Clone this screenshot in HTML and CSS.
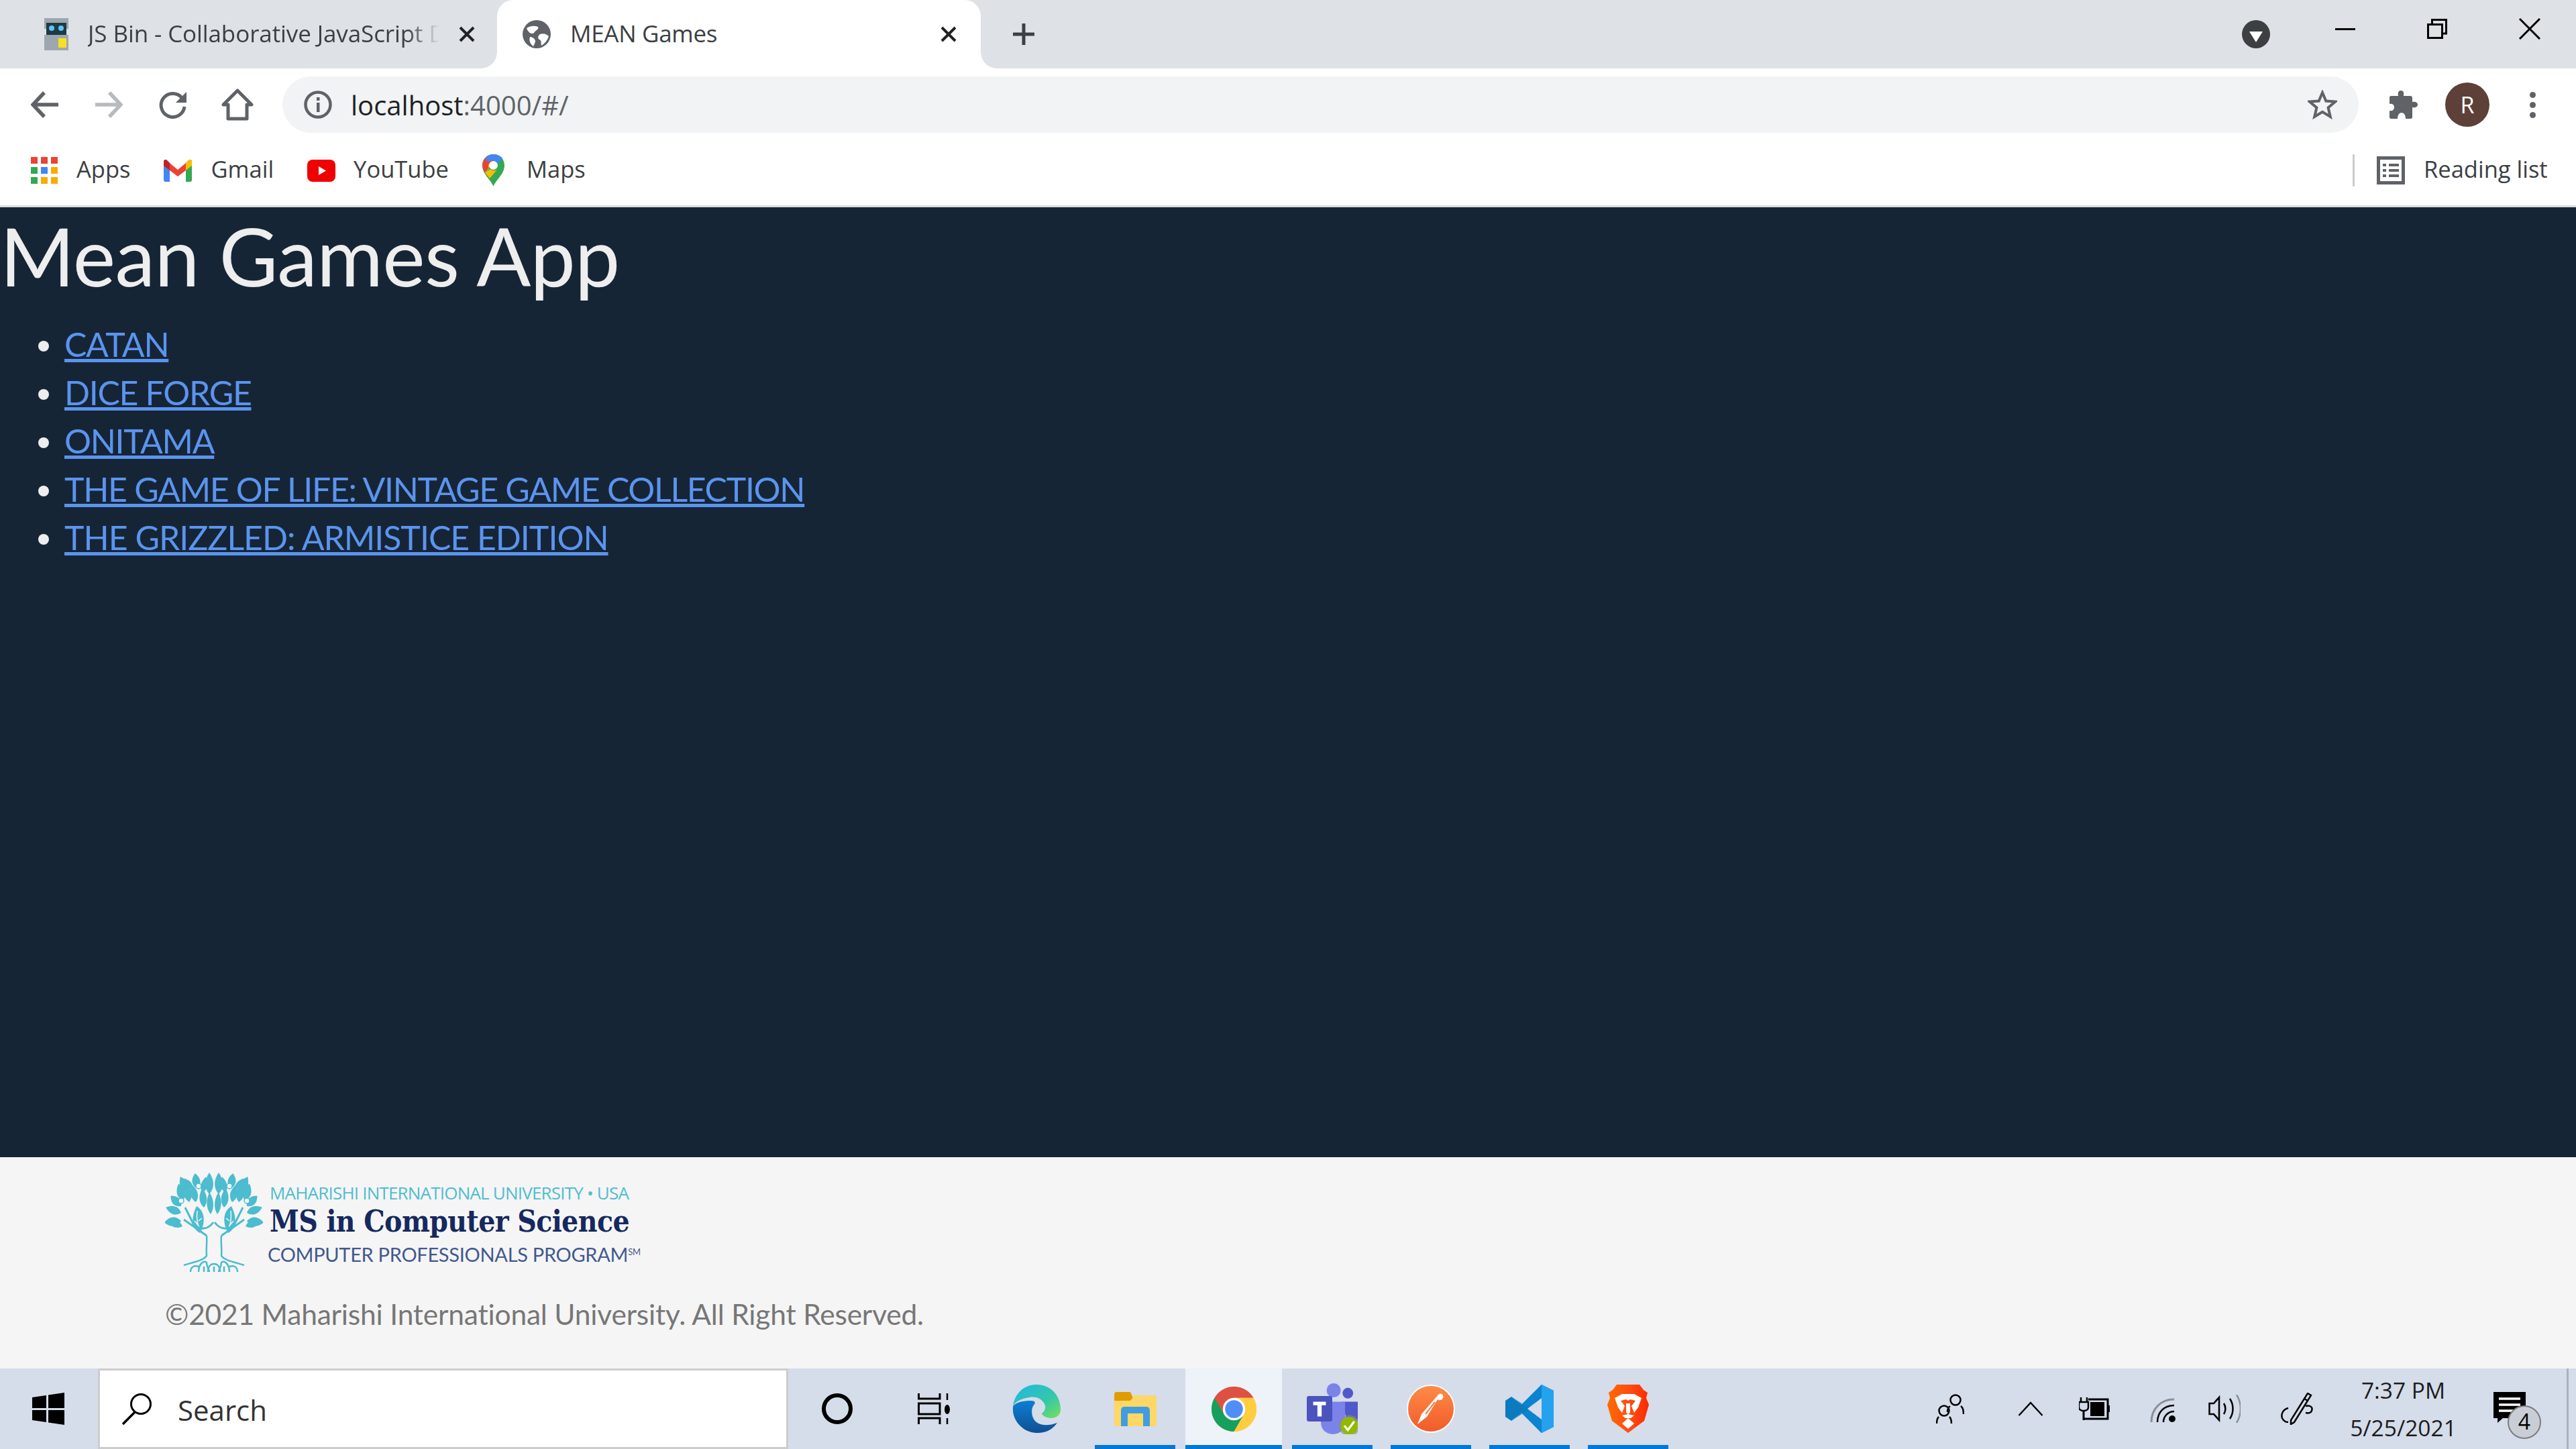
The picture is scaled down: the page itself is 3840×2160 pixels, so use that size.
FILE: index.html
```html
<!DOCTYPE html>
<html lang="en">
<head>
<meta charset="utf-8">
<title>MEAN Games</title>
<link rel="stylesheet" href="styles.css">
</head>
<body>
<header class="chrome">
  <div class="tabstrip">
    <div class="tab tab-inactive">
      <svg class="fav-jsbin" viewBox="0 0 36 48"><rect y="0" width="36" height="16" fill="#9ea7af"/><rect x="3" y="7" width="30" height="18" fill="#1e3a46"/><circle cx="11" cy="15" r="4" fill="#5ec4f0"/><circle cx="25" cy="15" r="4" fill="#5ec4f0"/><rect y="25" width="36" height="23" fill="#9ea7af"/><rect x="21" y="30" width="12" height="14" fill="#f5e021"/></svg>
      <span class="tab-title tab-title-fade">JS Bin - Collaborative JavaScript D</span>
      <svg class="tab-close" viewBox="0 0 24 24"><path d="M2 2L22 22M22 2L2 22" stroke="#1f2124" stroke-width="4" fill="none"/></svg>
    </div>
    <div class="tab tab-active">
      <svg class="fav-globe" viewBox="0 0 42 42"><circle cx="21" cy="21" r="21" fill="#5f6368"/><path d="M6 12C12 8 18 8 23 10C25 14 19 15 17 19C14 21 9 20 6 12ZM26 21C31 19 36 21 39 24C37 30 33 35 28 38C27 33 29 31 25 29C22 27 23 23 26 21ZM11 25C15 25 19 28 19 32C18 35 17 37 16 39C12 36 9 31 11 25Z" fill="#fff"/></svg>
      <span class="tab-title">MEAN Games</span>
      <svg class="tab-close" viewBox="0 0 24 24"><path d="M2 2L22 22M22 2L2 22" stroke="#1f2124" stroke-width="4" fill="none"/></svg>
    </div>
    <svg class="new-tab" viewBox="0 0 36 36"><path d="M18 2V34M2 18H34" stroke="#3c4043" stroke-width="5" fill="none"/></svg>
    <div class="strip-right">
      <svg class="tab-search" viewBox="0 0 42 42"><circle cx="21" cy="21" r="21" fill="#3c4043"/><path d="M11 17H31L21 33Z" fill="#fff"/></svg>
      <svg class="win-min" viewBox="0 0 30 3"><rect width="30" height="3" fill="#000"/></svg>
      <svg class="win-restore" viewBox="0 0 30 30"><path d="M1.5 8.5H22.5V28.500H1.500ZM7.500 8V1.500H28.500V22H23" fill="none" stroke="#000" stroke-width="3"/></svg>
      <svg class="win-close" viewBox="0 0 32 32"><path d="M1 1L31 31M31 1L1 31" stroke="#000" stroke-width="3" fill="none"/></svg>
    </div>
  </div>
  <div class="toolbar">
    <svg class="tb-icon tb-back" viewBox="0 0 42 42"><path d="M20 3L3 21L20 39M3 21H41" fill="none" stroke="#5f6368" stroke-width="5.500"/></svg>
    <svg class="tb-icon tb-forward" viewBox="0 0 42 42"><path d="M22 3L39 21L22 39M39 21H1" fill="none" stroke="#b8babd" stroke-width="5.500"/></svg>
    <svg class="tb-icon tb-reload" viewBox="0 0 42 42"><path d="M35 12A17.500 17.500 0 1 0 38 24" fill="none" stroke="#5f6368" stroke-width="5"/><path d="M41 2V18H25Z" fill="#5f6368"/></svg>
    <svg class="tb-icon tb-home" viewBox="0 0 48 48"><path d="M24 3L45 24H38V45H10V24H3Z" fill="none" stroke="#5f6368" stroke-width="5" stroke-linejoin="round"/></svg>
    <div class="omnibox">
      <svg class="info" viewBox="0 0 42 42"><circle cx="21" cy="21" r="18.500" fill="none" stroke="#5f6368" stroke-width="4.500"/><rect x="19" y="18" width="4.500" height="14" fill="#5f6368"/><rect x="19" y="10" width="4.500" height="5" fill="#5f6368"/></svg>
      <span class="url"><span class="url-host">localhost</span>:4000/#/</span>
      <svg class="star" viewBox="0 0 44 44"><path d="M22 4L27.300 16.500L41 17.600L30.600 26.500L33.800 40L22 32.900L10.200 40L13.400 26.500L3 17.600L16.700 16.500Z" fill="none" stroke="#5f6368" stroke-width="4"/></svg>
    </div>
    <svg class="tb-icon puzzle" viewBox="0 0 42 42"><path d="M2 8H13C12 2 14 0 17 0C20 0 22 2 21 8H31C33 8 34 9 34 11V17C39 16 42 18 42 21C42 24 39 26 34 25V40C34 41 33 42 31 42H24C24 36 21 33 18 33C15 33 12 36 12 42H3C1 42 0 41 0 40V30C5 31 7 28 7 25C7 22 5 19 0 20V10C0 9 1 8 2 8Z" fill="#5f6368"/></svg>
    <span class="avatar">R</span>
    <div class="kebab"><i></i><i></i><i></i></div>
  </div>
  <div class="bookmarks">
    <div class="bm bm-apps">
      <svg class="bm-i-apps" viewBox="0 0 40 40"><g fill="#ea4335"><rect x="0" y="0" width="10" height="10"/><rect x="15" y="0" width="10" height="10"/><rect x="30" y="0" width="10" height="10"/></g><rect x="0" y="15" width="10" height="10" fill="#34a853"/><rect x="15" y="15" width="10" height="10" fill="#4285f4"/><rect x="30" y="15" width="10" height="10" fill="#f9ab00"/><rect x="0" y="30" width="10" height="10" fill="#34a853"/><rect x="15" y="30" width="10" height="10" fill="#f9ab00"/><rect x="30" y="30" width="10" height="10" fill="#f9ab00"/></svg>
      <span>Apps</span>
    </div>
    <div class="bm bm-gmail">
      <svg class="bm-i-gmail" viewBox="0 0 42 33"><path d="M0 3C0 0 3-1 5 1L9 5V33H3C1 33 0 32 0 30Z" fill="#4285f4"/><path d="M33 5L37 1C39-1 42 0 42 3V30C42 32 41 33 39 33H33Z" fill="#34a853"/><path d="M9 5L21 15L33 5V16L21 25L9 16Z" fill="#ea4335"/><path d="M0 3C0 0 3-1 5 1L9 5V16L0 9Z" fill="#c5221f"/><path d="M33 5L37 1C39-1 42 0 42 3V9L33 16Z" fill="#fbbc04"/></svg>
      <span>Gmail</span>
    </div>
    <div class="bm bm-yt">
      <svg class="bm-i-yt" viewBox="0 0 42 33"><rect width="42" height="33" rx="8" fill="#f00000"/><path d="M17 10L28 16.500L17 23Z" fill="#fff"/></svg>
      <span>YouTube</span>
    </div>
    <div class="bm bm-maps">
      <svg class="bm-i-maps" viewBox="0 0 33 48"><path d="M16.500 48C13 38 0 30 0 16.500C0 7 7 0 16.500 0C26 0 33 7 33 16.500C33 30 20 38 16.500 48Z" fill="#34a853"/><path d="M4 6C7 2 11 0 16.500 0C19 0 21 .5 23 1.500L4 27C1.500 23 0 20 0 16.500C0 12 1.500 9 4 6Z" fill="#ea4335"/><path d="M9 12L4 6C7 2 11 0 16.500 0C22 0 27 2 30 6L23 14C20 8 13 8 9 12Z" fill="#4285f4"/><path d="M4 27L16 12C10 13 7 17 10 21L4 27C6 30 9 33 11 36L22 23C19 25 15 25 12 22Z" fill="#fbbc04"/><circle cx="16.500" cy="16.500" r="6.500" fill="#fff"/></svg>
      <span>Maps</span>
    </div>
    <div class="reading">
      <svg class="bm-i-read" viewBox="0 0 42 42"><path d="M2.500 2.500H39.500V39.500H2.500Z" fill="none" stroke="#5f6368" stroke-width="5"/><path d="M9 11H14V15H9ZM18 11H33V15H18ZM9 19H14V23H9ZM18 19H33V23H18ZM9 27H14V31H9ZM18 27H33V31H18Z" fill="#5f6368"/></svg>
      <span>Reading list</span>
    </div>
  </div>
</header>

<main class="app">
  <h1 class="app-title">Mean Games App</h1>
  <ul class="games">
    <li><a href="#">CATAN</a></li>
    <li><a href="#">DICE FORGE</a></li>
    <li><a href="#">ONITAMA</a></li>
    <li><a href="#">THE GAME OF LIFE: VINTAGE GAME COLLECTION</a></li>
    <li class="game-wide"><a href="#">THE GRIZZLED: ARMISTICE EDITION</a></li>
  </ul>
</main>

<footer class="site-footer">
  <div class="logo">
    <svg class="tree" viewBox="0 0 146 150">
      <defs>
        <path id="lf" d="M0 0C-8-6-8-14 0-22C8-14 8-6 0 0Z" fill="#4cbccf"/>
        <g id="half">
          <use href="#lf" transform="translate(66,32) scale(1,1.450)"/>
          <use href="#lf" transform="translate(48,24) rotate(-8) scale(1,1.050)"/>
          <use href="#lf" transform="translate(42,24) rotate(-50) scale(.9,1.100)"/>
          <use href="#lf" transform="translate(56,30) rotate(12) scale(.8,1.100)"/>
          <use href="#lf" transform="translate(34,30) rotate(-25) scale(1,1.200)"/>
          <use href="#lf" transform="translate(27,42) rotate(-15) scale(1,1.200)"/>
          <use href="#lf" transform="translate(24,50) rotate(-45) scale(1,1)"/>
          <use href="#lf" transform="translate(24,60) rotate(-70) scale(1,1.100)"/>
          <use href="#lf" transform="translate(24,72) rotate(-95) scale(1.100,1.150)"/>
          <use href="#lf" transform="translate(26,80) rotate(-70) scale(.9,1.100)"/>
          <use href="#lf" transform="translate(36,44) rotate(-10) scale(1,1.300)"/>
          <use href="#lf" transform="translate(46,44) rotate(-12) scale(.9,1.200)"/>
          <use href="#lf" transform="translate(58,52) rotate(-5) scale(.9,1.300)"/>
          <use href="#lf" transform="translate(68,62) rotate(-3) scale(.8,1.500)"/>
          <path d="M52 90C40 84 38 68 47 50C58 56 62 72 52 90Z" fill="#4cbccf"/>
          <path d="M52 84C47 76 47 66 48 57M50 72L55 68M49 78L44 72" stroke="#f5f5f5" stroke-width="1.500" fill="none"/>
          <circle cx="50" cy="20" r="4" fill="#f5f5f5" stroke="#4cbccf" stroke-width="1.500"/>
          <circle cx="24" cy="42" r="4" fill="#f5f5f5" stroke="#4cbccf" stroke-width="1.500"/>
          <path d="M62 94C63 104 61 112 62 124C58 130 48 132 28 138" fill="none" stroke="#4cbccf" stroke-width="2.500"/>
          <path d="M62 94L28 70M30 52L42 76C48 84 62 88 72 74" fill="none" stroke="#4cbccf" stroke-width="3"/>
          <path d="M38 148C38 140 44 138 50 140M50 148C50 136 58 130 62 134C62 142 66 144 66 148M58 148V140" fill="none" stroke="#4cbccf" stroke-width="2.500"/>
        </g>
      </defs>
      <use href="#half"/>
      <use href="#half" transform="matrix(-1 0 0 1 146 0)"/>
      <path d="M64 148C64 140 68 136 73 136C78 136 82 140 82 148M73 140V148" fill="none" stroke="#4cbccf" stroke-width="2.500"/>
    </svg>
    <div class="logo-text">
      <div class="logo-line1">MAHARISHI INTERNATIONAL UNIVERSITY • USA</div>
      <div class="logo-line2">MS in Computer Science</div>
      <div class="logo-line3">COMPUTER PROFESSIONALS PROGRAM<sup>SM</sup></div>
    </div>
  </div>
  <p class="copyright">©2021 Maharishi International University. All Right Reserved.</p>
</footer>

<nav class="taskbar">
  <div class="start">
    <svg class="win-logo" viewBox="0 0 48 48"><path d="M0 7L21 4V23H0ZM24 3.500L48 0V23H24ZM0 26H21V44L0 41ZM24 26H48V48L24 44.500Z" fill="#000"/></svg>
  </div>
  <div class="search">
    <svg class="search-icon" viewBox="0 0 48 48"><circle cx="30" cy="17" r="14.500" fill="none" stroke="#000" stroke-width="3"/><path d="M21 29L3 47" stroke="#000" stroke-width="3.500"/></svg>
    <span>Search</span>
  </div>
  <svg class="cortana" viewBox="0 0 48 48"><circle cx="24" cy="24" r="20" fill="none" stroke="#000" stroke-width="6"/></svg>
  <svg class="taskview" viewBox="0 0 48 46"><path d="M1.500 0V8H33V0M1.500 46V37H33V46M1.500 15H33V31H1.500Z" fill="none" stroke="#000" stroke-width="3"/><path d="M44 0V10M44 37V46" stroke="#000" stroke-width="2.500"/><ellipse cx="44" cy="24" rx="4" ry="7" fill="#000"/></svg>
  <svg class="app-edge" viewBox="0 0 72 72">
    <defs>
      <linearGradient id="eg" x1="0" y1="0" x2="1" y2="1"><stop offset="0" stop-color="#1fb6e4"/><stop offset=".6" stop-color="#35c8a8"/><stop offset="1" stop-color="#79e05c"/></linearGradient>
      <linearGradient id="eb" x1="0" y1="0" x2="0" y2="1"><stop offset="0" stop-color="#0d7fd4"/><stop offset="1" stop-color="#0f4f94"/></linearGradient>
    </defs>
    <path d="M1 33C3 13 18 0 36 0C58 0 72 17 72 37C72 46 65 50 58 50C51 50 44 46 44 43C48 40 50 36 49 31C46 22 36 17 26 19C12 21 3 26 1 33Z" fill="url(#eg)"/>
    <path d="M1 33C-1 54 16 72 38 72C50 72 60 67 67 57C56 61 44 62 36 56C28 50 28 37 31 32C36 26 34 24 27 24C13 24 3 28 1 33Z" fill="url(#eb)"/>
  </svg>
  <div class="slot slot-on">
    <svg class="app-files" viewBox="0 0 63 51"><path d="M0 4C0 2 1 0 3 0H24L30 13H0Z" fill="#e19c00"/><path d="M0 13H24L30 5H60C62 5 63 6 63 8V48C63 50 62 51 60 51H3C1 51 0 50 0 48Z" fill="#ffd766"/><path d="M10 51V28C10 24 12 22 15 22H48C51 22 53 24 53 28V51H43V32H20V51Z" fill="#409ee0"/></svg>
  </div>
  <div class="slot slot-on slot-active">
    <svg class="app-chrome" viewBox="0 0 48 48">
      <circle cx="24" cy="24" r="24" fill="#fbc02d"/>
      <path d="M3.200 12A24 24 0 0 0 24 48L34.400 30L13.600 18Z" fill="#16a05d"/>
      <path d="M3.200 12A24 24 0 0 1 44.800 12H24L13.600 30Z" fill="#dd5144"/>
      <path d="M44.800 12H24L34.400 30L24 48A24 24 0 0 0 44.800 12Z" fill="#ffcd40"/>
      <circle cx="24" cy="24" r="12" fill="#fff"/><circle cx="24" cy="24" r="9.500" fill="#4f8ef5"/>
    </svg>
  </div>
  <div class="slot slot-on">
    <svg class="app-teams" viewBox="0 0 72 72">
      <circle cx="38" cy="10" r="10" fill="#7b83eb"/><circle cx="58" cy="14" r="7.500" fill="#5059c9"/>
      <path d="M50 26H72V50C72 58 64 62 58 60Z" fill="#5059c9"/>
      <path d="M20 26H54V56C54 66 46 72 37 72C28 72 20 66 20 56Z" fill="#7b83eb"/>
      <rect x="0" y="18" width="36" height="36" rx="3" fill="#4b53bc"/>
      <path d="M9 26H27V31H21V47H15V31H9Z" fill="#fff"/>
      <circle cx="60" cy="60" r="15" fill="#8a8a8a" opacity=".6"/>
      <circle cx="60" cy="60" r="12.500" fill="#92b900"/>
      <path d="M53 60L58 66L67 54" fill="none" stroke="#fff" stroke-width="3"/>
    </svg>
  </div>
  <div class="slot slot-on">
    <svg class="app-postman" viewBox="0 0 72 72">
      <defs><linearGradient id="pg" x1="0" y1="0" x2="0" y2="1"><stop offset="0" stop-color="#ff8c46"/><stop offset="1" stop-color="#f15a2b"/></linearGradient></defs>
      <circle cx="36" cy="36" r="35" fill="url(#pg)" stroke="#fff" stroke-width="2"/>
      <path d="M48 14C52 12 56 16 54 20C52 24 48 24 46 22L30 48L16 59L22 44Z" fill="#fff"/>
      <path d="M28 44L42 26" stroke="#f47036" stroke-width="2"/>
    </svg>
  </div>
  <div class="slot slot-on">
    <svg class="app-vscode" viewBox="0 0 72 72">
      <path d="M54 0L72 9V63L54 72L24 42L9 54L0 48V24L9 18L24 30Z" fill="#0b7bc0"/>
      <path d="M54 0L72 9V63L54 72Z" fill="#24a2ee"/>
      <path d="M54 0L54 21L38 36L54 51V72L24 42L9 54L36 36L9 18L24 30Z" fill="#0a84cf"/>
      <path d="M54 20V52L33 36Z" fill="#d5dcea"/>
    </svg>
  </div>
  <div class="slot slot-on">
    <svg class="app-brave" viewBox="0 0 62 72">
      <defs><linearGradient id="bg" x1="0" y1="0" x2="1" y2="0"><stop offset="0" stop-color="#ff6a00"/><stop offset=".55" stop-color="#ff4c12"/><stop offset="1" stop-color="#fb2a00"/></linearGradient></defs>
      <path d="M14 0H48L54 8L60 12L58 20L62 30L55 54L31 72L7 54L0 30L4 20L2 12L8 8Z" fill="url(#bg)"/>
      <path d="M11 20L22 14H40L51 20L46 34L40 42L36 32L42 24L34 22L31 24L28 22L20 24L26 32L22 42L16 34Z" fill="#fff"/>
      <path d="M28 28H34V42L31 44L28 42Z" fill="#fff"/>
      <path d="M31 50L40 58L31 66L22 58Z" fill="#fff"/>
      <path d="M22 46L31 44L40 46L35 50H27Z" fill="#fff"/>
    </svg>
  </div>
  <div class="tray">
    <svg class="t-people" viewBox="0 0 42 44"><circle cx="29" cy="9" r="7.500" fill="none" stroke="#000" stroke-width="2.500"/><path d="M21 18C18 20 17 24 17 27M37 18C40 20 41 24 41 30" fill="none" stroke="#000" stroke-width="2.500"/><circle cx="12" cy="25" r="7.500" fill="none" stroke="#000" stroke-width="2.500"/><path d="M4 34C2 36 1 40 1 44M20 34C22 36 23 40 23 44" fill="none" stroke="#000" stroke-width="2.500"/></svg>
    <svg class="t-caret" viewBox="0 0 38 22"><path d="M1.500 21L19 2L36.500 21" fill="none" stroke="#000" stroke-width="2.500"/></svg>
    <svg class="t-battery" viewBox="0 0 46 34"><path d="M3 0V7M12 0V7" stroke="#000" stroke-width="2.500"/><path d="M0 7H14V15C14 18 11 20 8 20H6C3 20 0 18 0 15Z" fill="none" stroke="#000" stroke-width="2.500"/><path d="M7 20V34" stroke="#000" stroke-width="3"/><path d="M14 3H43V32H7" fill="none" stroke="#000" stroke-width="3"/><rect x="17" y="7" width="21" height="21" fill="#000"/><rect x="43" y="12" width="3" height="10" fill="#000"/></svg>
    <svg class="t-wifi" viewBox="0 0 38 36"><path d="M2 36C2 16 16 2 36 2" fill="none" stroke="#8a8f98" stroke-width="3"/><path d="M11 36C11 21 21 11 36 11" fill="none" stroke="#000" stroke-width="2.500"/><path d="M20 36C20 27 27 20 36 20" fill="none" stroke="#000" stroke-width="2.500"/><circle cx="33" cy="31" r="5" fill="#000"/></svg>
    <svg class="t-volume" viewBox="0 0 48 42"><path d="M1.500 13H8L16 4V38L8 29H1.500Z" fill="none" stroke="#000" stroke-width="2.500"/><path d="M23 13C26 18 26 24 23 29" fill="none" stroke="#000" stroke-width="2.500"/><path d="M32 6C38 15 38 27 32 36" fill="none" stroke="#000" stroke-width="2.500"/><path d="M42 0C50 13 50 29 42 42" fill="none" stroke="#8a8f98" stroke-width="2.500"/></svg>
    <svg class="t-pen" viewBox="0 0 50 48"><path d="M40 1L45 4L20 44L15 47L15 41Z" fill="none" stroke="#000" stroke-width="2.500"/><path d="M35 9L40 12" stroke="#000" stroke-width="2.500"/><path d="M37 20C44 18 48 22 46 27C45 30 41 31 37 30" fill="none" stroke="#000" stroke-width="2.500"/><path d="M11 23C3 25 0 32 2 38C4 42 8 44 11 44" fill="none" stroke="#000" stroke-width="2.500"/></svg>
    <div class="clock"><span>7:37 PM</span><span>5/25/2021</span></div>
    <div class="notif">
      <svg class="t-notif" viewBox="0 0 48 46"><path d="M0 0H48V39H14L6 46V39H0Z" fill="#000"/><path d="M8 10H40M8 19H40M8 28H30" stroke="#fff" stroke-width="3.500"/></svg>
      <span class="notif-badge">4</span>
    </div>
    <i class="show-desktop"></i>
  </div>
</nav>
</body>
</html>
```

FILE: styles.css
```css
* { box-sizing: border-box; }
html, body { margin: 0; padding: 0; }
body {
  width: 3840px;
  height: 2160px;
  display: flex;
  flex-direction: column;
  overflow: hidden;
  font-family: "Open Sans", "Liberation Sans", sans-serif;
  background: #162536;
}
svg { display: block; flex: none; }

/* Browser chrome */
.chrome { flex: none; background: #fff; border-bottom: 3px solid #dcdee1; }
.tabstrip { height: 102px; background: #dee1e6; display: flex; align-items: stretch; }
.tab { display: flex; align-items: center; position: relative; font-size: 35px; letter-spacing: -0.3px; color: #3c4043; }
.tab-inactive { width: 741px; padding-left: 66px; }
.tab-active { width: 721px; background: #fff; border-radius: 24px 24px 0 0; padding-left: 38px; color: #3c4043; }
.tab-active::before, .tab-active::after {
  content: ""; position: absolute; bottom: 0; width: 24px; height: 24px;
  background: radial-gradient(circle at 0 0, #dee1e6 23.500px, #fff 24px);
}
.tab-active::before { left: -24px; }
.tab-active::after { right: -24px; background: radial-gradient(circle at 100% 0, #dee1e6 23.500px, #fff 24px); }
.tab-title { white-space: nowrap; margin-top: -3px; }
.tab-title-fade {
  width: 529px; overflow: hidden; margin-left: 29px; line-height: 50px; letter-spacing: -0.1px;
  -webkit-mask-image: linear-gradient(90deg, #000 90%, transparent 99%);
  mask-image: linear-gradient(90deg, #000 90%, transparent 99%);
}
.tab-active .tab-title { margin-left: 29px; width: 540px; }
.fav-jsbin { width: 36px; height: 48px; }
.fav-globe { width: 42px; height: 42px; }
.tab-close { width: 24px; height: 24px; margin-left: 24px; }
.tab-active .tab-close { margin-left: 12px; }
.new-tab { width: 36px; height: 36px; align-self: center; margin-left: 46px; }
.strip-right { margin-left: auto; display: flex; align-items: center; padding-right: 53px; }
.tab-search { width: 42px; height: 42px; }
.win-min { width: 30px; height: 3px; margin-left: 97px; margin-top: -16px; }
.win-restore { width: 30px; height: 30px; margin-left: 107px; margin-top: -16px; }
.win-close { width: 32px; height: 32px; margin-left: 107px; margin-top: -16px; }

.toolbar { height: 102px; display: flex; align-items: center; padding: 0 0 0 46px; background: #fff; }
.tb-icon { width: 42px; height: 42px; }
.tb-back { margin-top: 6px; }
.tb-forward { margin-left: 53px; margin-top: 6px; }
.tb-reload { margin-left: 54px; margin-top: 6px; }
.tb-home { width: 48px; height: 48px; margin-left: 51px; margin-top: 6px; }
.omnibox {
  margin-left: 43px; width: 3095px; height: 84px; margin-top: 12px; margin-bottom: 6px;
  background: #f1f3f4; border-radius: 42px;
  display: flex; align-items: center; padding-left: 32px; padding-right: 32px;
}
.omnibox .info { width: 42px; height: 42px; }
.url { margin-left: 28px; font-size: 40px; color: #5f6368; }
.url-host { color: #202124; }
.star { width: 44px; height: 44px; margin-left: auto; }
.puzzle { margin-left: 46px; margin-top: 6px; }
.avatar {
  width: 66px; height: 66px; border-radius: 50%; background: #5d4037; color: #fff;
  margin-left: 41px; margin-top: 6px;
  display: flex; align-items: center; justify-content: center; font-size: 34px;
}
.kebab { display: flex; flex-direction: column; gap: 6px; margin-left: 60px; margin-top: 6px; }
.kebab i { display: block; width: 9px; height: 9px; border-radius: 50%; background: #5f6368; }

.bookmarks { height: 102px; display: flex; align-items: center; font-size: 34.500px; color: #3c4043; padding-left: 46px; padding-bottom: 2px; }
.bm { display: flex; align-items: center; }
.bm span, .reading span { margin-top: -6px; }
.bm-i-apps { width: 40px; height: 40px; margin-right: 28px; }
.bm-i-gmail { width: 42px; height: 33px; margin-right: 28px; }
.bm-i-yt { width: 42px; height: 33px; margin-right: 27px; }
.bm-i-maps { width: 33px; height: 48px; margin-right: 33px; }
.bm-gmail { margin-left: 50px; }
.bm-yt { margin-left: 50px; }
.bm-maps { margin-left: 50px; }
.reading { margin-left: auto; display: flex; align-items: center; width: 333px; border-left: 3px solid #ccc; height: 48px; padding-left: 33px; white-space: nowrap; }
.bm-i-read { width: 42px; height: 42px; margin-right: 28px; }

/* App */
.app { flex: 1; background: #162536; color: #eee; font-family: Lato, "Liberation Sans", sans-serif; }
.app-title { margin: 0 0 24px; font-size: 120px; font-weight: 400; line-height: 1.2; letter-spacing: -0.7px; }
.games { margin: 0; padding: 0 0 0 96px; font-size: 50px; line-height: 72px; letter-spacing: -1.3px; }
.games a { color: #5b94ef; }
.game-wide { letter-spacing: -1px; }

/* Footer */
.site-footer { flex: none; height: 315px; background: #f5f5f5; padding: 23px 0 0 246px; font-family: Lato, "Liberation Sans", sans-serif; }
.logo { display: flex; align-items: flex-start; height: 150px; }
.tree { width: 146px; height: 150px; }
.logo-text { margin-left: 10px; padding-top: 17px; }
.logo-line1 { font-family: "Open Sans", sans-serif; font-weight: 500; font-size: 26px; line-height: 26px; letter-spacing: -0.8px; color: #4fbdd0; white-space: nowrap; }
.logo-line2 { font-family: "DejaVu Serif", serif; font-stretch: condensed; font-weight: 700; font-size: 44px; line-height: 60px; letter-spacing: -0.6px; color: #16295f; white-space: nowrap; }
.logo-line3 { font-size: 29px; line-height: 32px; letter-spacing: -0.3px; color: #41598f; white-space: nowrap; margin-left: -3px; margin-top: 3px; }
.logo-line3 sup { font-size: 13px; line-height: 0; vertical-align: 10px; }
.copyright { margin: 35px 0 0; font-size: 42.500px; line-height: 52px; letter-spacing: -0.2px; color: #777; white-space: nowrap; }

/* Taskbar */
.taskbar { flex: none; height: 120px; background: #d5dcea; display: flex; align-items: center; color: #1c1c1c; }
.start { width: 146px; padding-left: 48px; }
.win-logo { width: 48px; height: 48px; }
.search {
  width: 1029px; height: 120px; background: #fff; border: 3px solid #ccc;
  display: flex; align-items: center; padding-left: 31px; font-size: 42px; color: #333;
}
.search span { margin-top: 3px; }
.search-icon { width: 48px; height: 48px; margin-right: 37px; }
.cortana { width: 48px; height: 48px; margin-left: 49px; }
.taskview { width: 48px; height: 46px; margin-left: 96px; }
.app-edge { width: 72px; height: 72px; margin-left: 93px; }
.slot { width: 120px; height: 120px; display: flex; align-items: center; justify-content: center; border-bottom: 6px solid transparent; padding-top: 6px; }
.slot-on { border-bottom-color: #0078d7; }
.slot-active { width: 144px; background: #eef2f9; margin-left: 15px; }
.app-edge + .slot { margin-left: 51px; }
.slot-active + .slot { margin-left: 15px; }
.slot-active + .slot ~ .slot { margin-left: 27px; }
.app-files { width: 63px; height: 51px; }
.app-chrome { width: 67px; height: 67px; }
.app-teams { width: 76px; height: 76px; }
.app-postman { width: 72px; height: 72px; }
.app-vscode { width: 72px; height: 72px; }
.app-brave { width: 62px; height: 72px; }

.tray { margin-left: auto; display: flex; align-items: center; height: 120px; }
.t-people { width: 42px; height: 44px; }
.t-caret { width: 38px; height: 22px; margin-left: 80px; }
.t-battery { width: 46px; height: 34px; margin-left: 53px; }
.t-wifi { width: 38px; height: 36px; margin-left: 60px; margin-top: 4px; }
.t-volume { width: 48px; height: 42px; margin-left: 49px; }
.t-pen { width: 50px; height: 48px; margin-left: 60px; }
.clock { width: 215px; margin-left: 25px; display: flex; flex-direction: column; align-items: center; font-size: 33.500px; line-height: 56px; color: #1c1c1c; }
.notif { position: relative; width: 48px; height: 46px; margin-left: 27px; margin-top: -5px; }
.t-notif { width: 48px; height: 46px; }
.notif-badge {
  position: absolute; left: 21px; top: 20px; width: 50px; height: 50px; border-radius: 50%;
  background: #c9ced6; border: 2px solid #7d7d7d; color: #000; font-size: 32px; line-height: 44px; text-align: center;
}
.show-desktop { display: block; width: 3px; height: 120px; background: #a9b1c0; margin-left: 61px; margin-right: 11px; }
```
